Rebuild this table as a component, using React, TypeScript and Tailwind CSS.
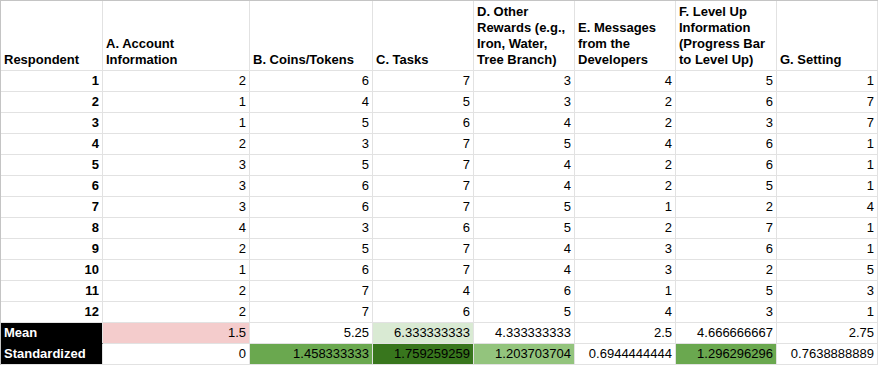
import React from "react";

const headers: string[][] = [
  ["Respondent"],
  ["A. Account", "Information"],
  ["B. Coins/Tokens"],
  ["C. Tasks"],
  ["D. Other", "Rewards (e.g.,", "Iron, Water,", "Tree Branch)"],
  ["E. Messages", "from the", "Developers"],
  ["F. Level Up", "Information", "(Progress Bar", "to Level Up)"],
  ["G. Setting"],
];

const data: number[][] = [
  [2, 6, 7, 3, 4, 5, 1],
  [1, 4, 5, 3, 2, 6, 7],
  [1, 5, 6, 4, 2, 3, 7],
  [2, 3, 7, 5, 4, 6, 1],
  [3, 5, 7, 4, 2, 6, 1],
  [3, 6, 7, 4, 2, 5, 1],
  [3, 6, 7, 5, 1, 2, 4],
  [4, 3, 6, 5, 2, 7, 1],
  [2, 5, 7, 4, 3, 6, 1],
  [1, 6, 7, 4, 3, 2, 5],
  [2, 7, 4, 6, 1, 5, 3],
  [2, 7, 6, 5, 4, 3, 1],
];

const mean: { v: string; bg: string }[] = [
  { v: "1.5", bg: "bg-[#f4cccc]" },
  { v: "5.25", bg: "bg-white" },
  { v: "6.333333333", bg: "bg-[#d9ead3]" },
  { v: "4.333333333", bg: "bg-white" },
  { v: "2.5", bg: "bg-white" },
  { v: "4.666666667", bg: "bg-white" },
  { v: "2.75", bg: "bg-white" },
];

const std: { v: string; bg: string }[] = [
  { v: "0", bg: "bg-white" },
  { v: "1.458333333", bg: "bg-[#6aa84f]" },
  { v: "1.759259259", bg: "bg-[#38761d]" },
  { v: "1.203703704", bg: "bg-[#93c47d]" },
  { v: "0.6944444444", bg: "bg-white" },
  { v: "1.296296296", bg: "bg-[#6aa84f]" },
  { v: "0.7638888889", bg: "bg-white" },
];

const cell = "border-r border-b border-[#e2e2e2] h-[21px] px-[3px] flex items-center leading-[16px] whitespace-nowrap overflow-hidden";

export default function App() {
  return (
    <div
      className="bg-white w-[879px] h-[367px] overflow-hidden text-[13px] text-black"
      style={{ fontFamily: '"Liberation Sans", Arial, sans-serif' }}
    >
      <div className="grid grid-cols-[102px_147px_123px_101px_101px_101px_101px_101px] border-l border-t border-[#c4c4c4] w-[878px]">
        {headers.map((lines, i) => (
          <div
            key={`h${i}`}
            className="border-r border-b border-[#e2e2e2] h-[70px] px-[3px] pb-[2px] flex flex-col justify-end font-bold leading-[16px] whitespace-nowrap"
          >
            {lines.map((l, j) => (
              <div key={j}>{l}</div>
            ))}
          </div>
        ))}
        {data.map((row, r) => (
          <React.Fragment key={`r${r}`}>
            <div className={`${cell} justify-end font-bold`}>{r + 1}</div>
            {row.map((v, c) => (
              <div key={c} className={`${cell} justify-end`}>
                {v}
              </div>
            ))}
          </React.Fragment>
        ))}
        <div className={`${cell} bg-black text-white font-bold border-b-black`}>Mean</div>
        {mean.map((m, c) => (
          <div key={`m${c}`} className={`${cell} justify-end ${m.bg}`}>
            {m.v}
          </div>
        ))}
        <div className={`${cell} bg-black text-white font-bold`}>Standardized</div>
        {std.map((m, c) => (
          <div key={`s${c}`} className={`${cell} justify-end ${m.bg}`}>
            {m.v}
          </div>
        ))}
      </div>
    </div>
  );
}
